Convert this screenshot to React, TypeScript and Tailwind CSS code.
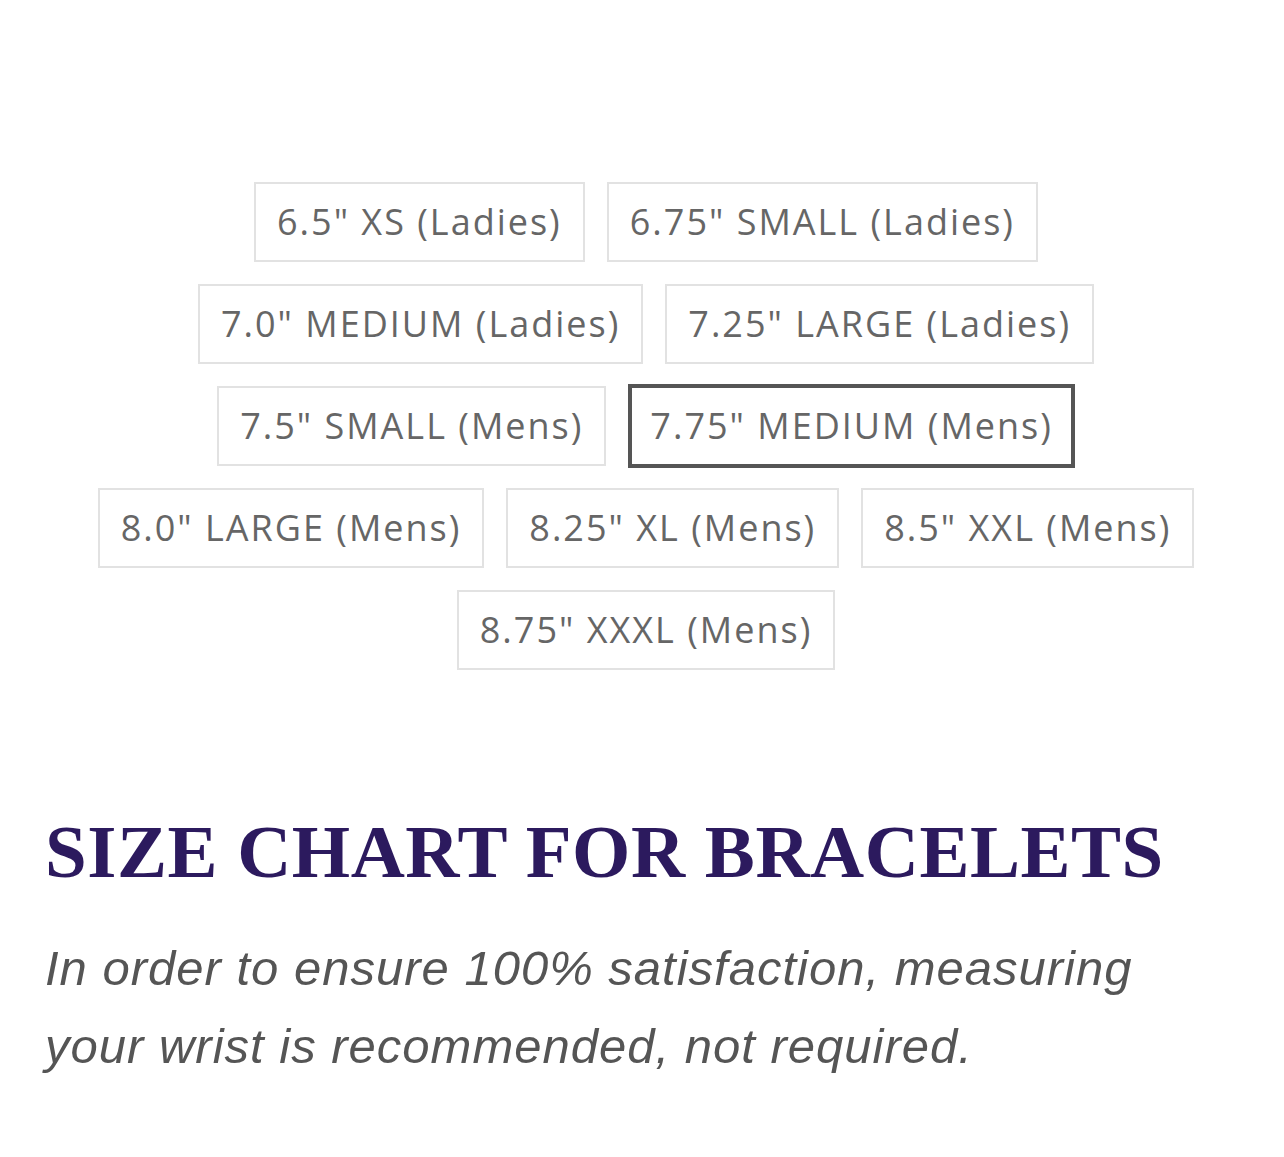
const sizes = [
  { label: '6.5" XS (Ladies)', selected: false },
  { label: '6.75" SMALL (Ladies)', selected: false },
  { label: '7.0" MEDIUM (Ladies)', selected: false },
  { label: '7.25" LARGE (Ladies)', selected: false },
  { label: '7.5" SMALL (Mens)', selected: false },
  { label: '7.75" MEDIUM (Mens)', selected: true },
  { label: '8.0" LARGE (Mens)', selected: false },
  { label: '8.25" XL (Mens)', selected: false },
  { label: '8.5" XXL (Mens)', selected: false },
  { label: '8.75" XXXL (Mens)', selected: false },
];

const SizeButton = ({ label, selected }: { label: string; selected: boolean }) => (
  <button
    className={
      selected
        ? "h-[84px] -my-[2px] px-[18px] flex items-center border-[4px] border-[#555555] bg-white text-[#666666] text-[36px] tracking-[2px] whitespace-nowrap"
        : "h-[80px] px-[21px] flex items-center border-2 border-[#e2e2e2] bg-white text-[#666666] text-[36px] tracking-[2px] whitespace-nowrap"
    }
    style={{ fontFamily: '"Open Sans", sans-serif' }}
  >
    {label}
  </button>
);

export default function App() {
  return (
    <div className="min-h-[1157px] w-full bg-white">
      <div className="pt-[182px] flex justify-center pl-[8px]">
        <div className="w-[1160px] flex flex-wrap justify-center items-center gap-x-[22px] gap-y-[22px]">
          {sizes.map((s) => (
            <SizeButton key={s.label} label={s.label} selected={s.selected} />
          ))}
        </div>
      </div>

      <div className="px-[45px] mt-[144px]">
        <h2
          className="text-[75px] leading-none font-bold text-[#2c1a5e] tracking-[0.5px]"
          style={{ fontFamily: '"Liberation Serif", serif' }}
        >
          SIZE CHART FOR BRACELETS
        </h2>
        <p
          className="mt-[40px] text-[49px] leading-[78px] italic text-[#555555] tracking-[1px]"
          style={{ fontFamily: '"Liberation Sans", Arial, sans-serif' }}
        >
          In order to ensure 100% satisfaction, measuring
          <br />
          your wrist is recommended, not required.
        </p>
      </div>
    </div>
  );
}
